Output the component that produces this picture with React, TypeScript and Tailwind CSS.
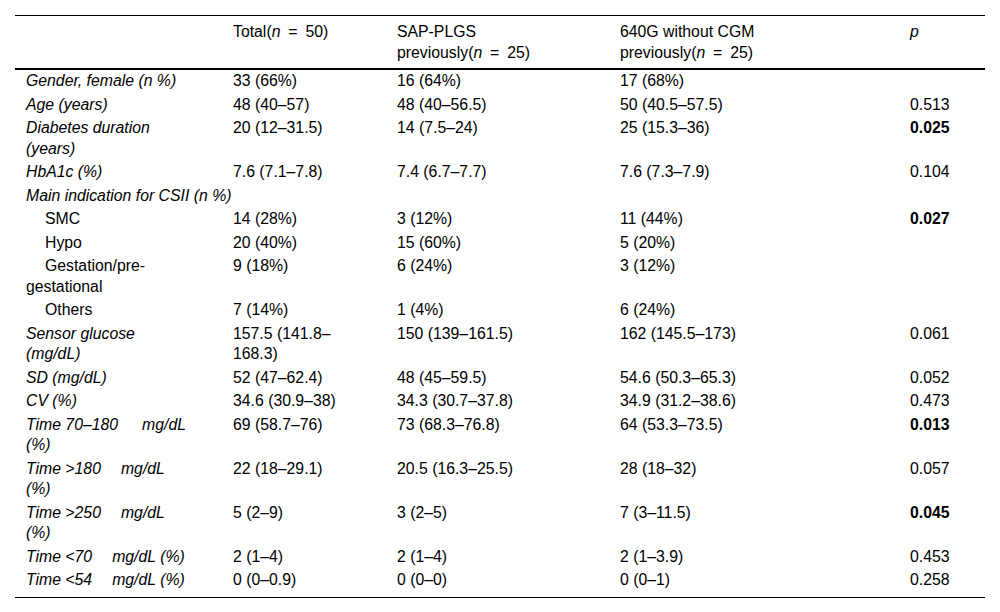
import React from "react";

type Row = {
  label: React.ReactNode;
  cells?: React.ReactNode[];
  indent?: boolean;
  span?: boolean;
  italic?: boolean;
};

const G = ({ w }: { w: number }) => (
  <span className="inline-block" style={{ width: w }} />
);

const T = (a: string, w: number, tail: string, brk: boolean) => (
  <>
    <span className="whitespace-nowrap">
      {a}
      <G w={w} />
      mg/dL
    </span>
    {brk ? <br /> : " "}
    {tail}
  </>
);

const B = ({ children }: { children: React.ReactNode }) => (
  <span className="font-bold">{children}</span>
);

const rows: Row[] = [
  { label: "Gender, female (n %)", italic: true, cells: ["33 (66%)", "16 (64%)", "17 (68%)", ""] },
  { label: "Age (years)", italic: true, cells: ["48 (40–57)", "48 (40–56.5)", "50 (40.5–57.5)", "0.513"] },
  {
    label: (
      <>
        Diabetes duration
        <br />
        (years)
      </>
    ),
    italic: true,
    cells: ["20 (12–31.5)", "14 (7.5–24)", "25 (15.3–36)", <B>0.025</B>],
  },
  { label: "HbA1c (%)", italic: true, cells: ["7.6 (7.1–7.8)", "7.4 (6.7–7.7)", "7.6 (7.3–7.9)", "0.104"] },
  { label: "Main indication for CSII (n %)", italic: true, span: true },
  { label: "SMC", indent: true, cells: ["14 (28%)", "3 (12%)", "11 (44%)", <B>0.027</B>] },
  { label: "Hypo", indent: true, cells: ["20 (40%)", "15 (60%)", "5 (20%)", ""] },
  {
    label: (
      <>
        Gestation/pre-
        <br />
        gestational
      </>
    ),
    indent: true,
    cells: ["9 (18%)", "6 (24%)", "3 (12%)", ""],
  },
  { label: "Others", indent: true, cells: ["7 (14%)", "1 (4%)", "6 (24%)", ""] },
  {
    label: (
      <>
        Sensor glucose
        <br />
        (mg/dL)
      </>
    ),
    italic: true,
    cells: [
      <>
        157.5 (141.8–
        <br />
        168.3)
      </>,
      "150 (139–161.5)",
      "162 (145.5–173)",
      "0.061",
    ],
  },
  { label: "SD (mg/dL)", italic: true, cells: ["52 (47–62.4)", "48 (45–59.5)", "54.6 (50.3–65.3)", "0.052"] },
  { label: "CV (%)", italic: true, cells: ["34.6 (30.9–38)", "34.3 (30.7–37.8)", "34.9 (31.2–38.6)", "0.473"] },
  { label: T("Time 70–180", 24, "(%)", true), italic: true, cells: ["69 (58.7–76)", "73 (68.3–76.8)", "64 (53.3–73.5)", <B>0.013</B>] },
  { label: T("Time >180", 20, "(%)", true), italic: true, cells: ["22 (18–29.1)", "20.5 (16.3–25.5)", "28 (18–32)", "0.057"] },
  { label: T("Time >250", 20, "(%)", true), italic: true, cells: ["5 (2–9)", "3 (2–5)", "7 (3–11.5)", <B>0.045</B>] },
  { label: T("Time <70", 20, "(%)", false), italic: true, cells: ["2 (1–4)", "2 (1–4)", "2 (1–3.9)", "0.453"] },
  { label: T("Time <54", 20, "(%)", false), italic: true, cells: ["0 (0–0.9)", "0 (0–0)", "0 (0–1)", "0.258"] },
];

const N = ({ v }: { v: string }) => (
  <span className="whitespace-nowrap">
    (<i>n</i>
    {"\u2002=\u2002"}
    {v})
  </span>
);

export default function App() {
  return (
    <div
      className="w-[1000px] h-[612px] bg-white text-black pt-[15px] pl-[15px]"
      style={{ fontFamily: '"Liberation Sans", Arial, sans-serif' }}
    >
      <table className="table-fixed border-collapse w-[970px] text-[15.8px] leading-[20.5px]">
        <colgroup>
          <col className="w-[207px]" />
          <col className="w-[164px]" />
          <col className="w-[223px]" />
          <col className="w-[290px]" />
          <col className="w-[86px]" />
        </colgroup>
        <thead>
          <tr className="border-t border-black border-b-2 align-top text-left">
            <th className="font-normal pl-[11px] pr-[4px] pt-[6px] pb-[5px]"></th>
            <th className="font-normal pl-[11px] pr-[4px] pt-[6px] pb-[5px] whitespace-nowrap">
              Total<N v="50" />
            </th>
            <th className="font-normal pl-[11px] pr-[4px] pt-[6px] pb-[5px] whitespace-nowrap">
              SAP-PLGS
              <br />
              previously<N v="25" />
            </th>
            <th className="font-normal pl-[11px] pr-[4px] pt-[6px] pb-[5px] whitespace-nowrap">
              640G without CGM
              <br />
              previously<N v="25" />
            </th>
            <th className="font-normal pl-[11px] pr-[4px] pt-[6px] pb-[5px]">
              <i>p</i>
            </th>
          </tr>
        </thead>
        <tbody>
          {rows.map((r, i) => {
            const last = i === rows.length - 1;
            const pb = last ? "pb-[6px]" : "pb-[2px]";
            if (r.span) {
              return (
                <tr key={i} className="align-top">
                  <td colSpan={5} className={`pl-[11px] pt-[1px] ${pb} italic whitespace-nowrap`}>
                    {r.label}
                  </td>
                </tr>
              );
            }
            return (
              <tr key={i} className={`align-top ${last ? "border-b border-black" : ""}`}>
                <td
                  className={`pl-[11px] pr-[4px] pt-[1px] ${pb} whitespace-nowrap ${r.italic ? "italic" : ""} ${
                    r.indent ? "indent-[19px]" : ""
                  }`}
                >
                  {r.label}
                </td>
                {r.cells!.map((c, j) => (
                  <td key={j} className={`pl-[11px] pr-[4px] pt-[1px] ${pb} whitespace-nowrap`}>
                    {c}
                  </td>
                ))}
              </tr>
            );
          })}
        </tbody>
      </table>
    </div>
  );
}
